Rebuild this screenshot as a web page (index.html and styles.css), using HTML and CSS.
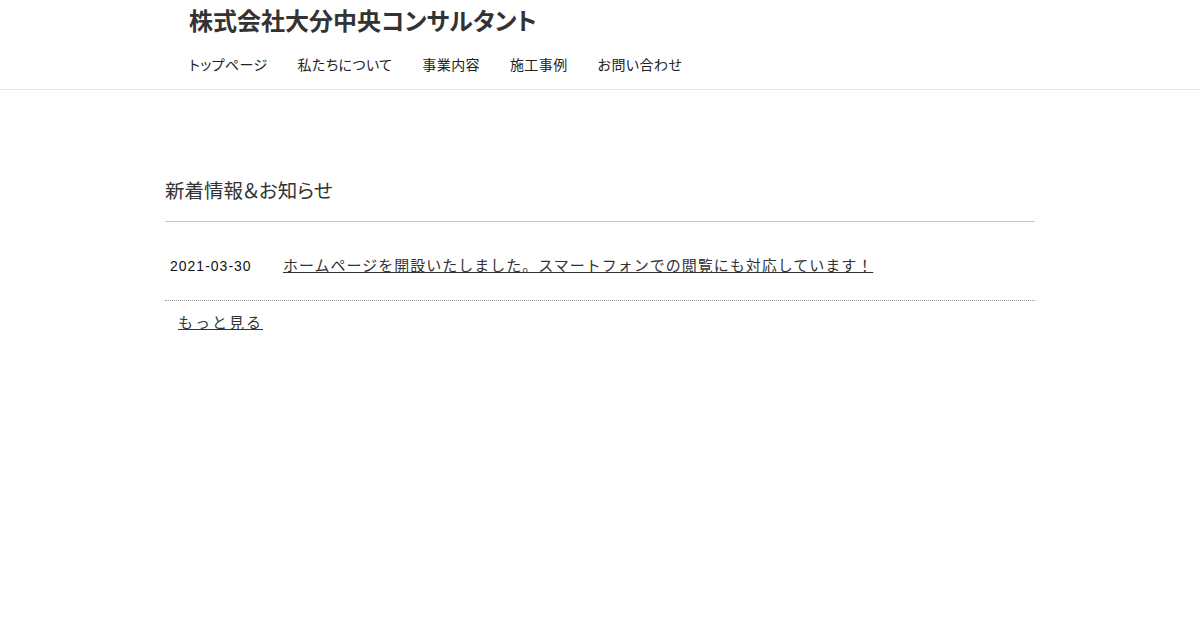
FILE: index.html
```html
<!DOCTYPE html>
<html lang="ja">
<head>
<meta charset="utf-8">
<title>株式会社大分中央コンサルタント</title>
<link rel="stylesheet" href="styles.css">
</head>
<body>
<header class="site-header">
  <div class="header-inner">
    <h1 class="site-title">株式会社大分中央コンサルタント</h1>
    <nav class="global-nav">
      <a href="#">トップページ</a>
      <a href="#">私たちについて</a>
      <a href="#">事業内容</a>
      <a href="#">施工事例</a>
      <a href="#">お問い合わせ</a>
    </nav>
  </div>
</header>
<main class="content">
  <section class="news">
    <h2 class="news-title">新着情報＆お知らせ</h2>
    <dl class="news-list">
      <div class="news-item">
        <dt class="news-date">2021-03-30</dt>
        <dd class="news-body"><a href="#">ホームページを開設いたしました。スマートフォンでの閲覧にも対応しています！</a></dd>
      </div>
    </dl>
    <a class="more-link" href="#">もっと見る</a>
  </section>
</main>
</body>
</html>
```
FILE: styles.css
```css
html, body {
  margin: 0;
  padding: 0;
  background: #fff;
}
body {
  font-family: "Liberation Sans", "Noto Sans CJK JP", sans-serif;
  color: #333;
}
a {
  color: #333;
}
.site-header {
  border-bottom: 1px solid #e6e6e6;
}
.header-inner {
  width: 870px;
  margin: 0 auto;
  padding: 0 0 0 24px;
  box-sizing: border-box;
}
.site-title {
  margin: 0;
  padding-top: 7px;
  font-size: 24px;
  line-height: 30px;
  font-weight: bold;
  font-feature-settings: "palt";
  letter-spacing: 0;
  color: #333;
}
.global-nav {
  display: flex;
  gap: 30px;
  padding: 17px 0 13px;
}
.global-nav a {
  font-size: 14px;
  line-height: 22px;
  text-decoration: none;
  font-feature-settings: "palt";
  letter-spacing: 0.4px;
  color: #222;
}
.content {
  width: 870px;
  margin: 0 auto;
  padding-top: 89px;
}
.news-title {
  margin: 0;
  font-size: 19.5px;
  line-height: 24px;
  font-weight: normal;
  font-feature-settings: "palt";
  color: #333;
  padding-bottom: 18px;
  border-bottom: 1px solid #c8c8c8;
}
.news-list {
  margin: 0;
}
.news-item {
  display: flex;
  padding: 33px 0 23px 5px;
  border-bottom: 1px dotted #999;
}
.news-date {
  width: 113px;
  font-size: 14px;
  line-height: 22px;
  letter-spacing: 1px;
  color: #111;
}
.news-body {
  margin: 0;
  font-size: 15px;
  line-height: 22px;
  letter-spacing: 1px;
}
.news-body a {
  color: #333;
}
.more-link {
  display: inline-block;
  margin: 11px 0 0 13px;
  font-size: 15px;
  line-height: 22px;
  letter-spacing: 2px;
  color: #333;
}
```
